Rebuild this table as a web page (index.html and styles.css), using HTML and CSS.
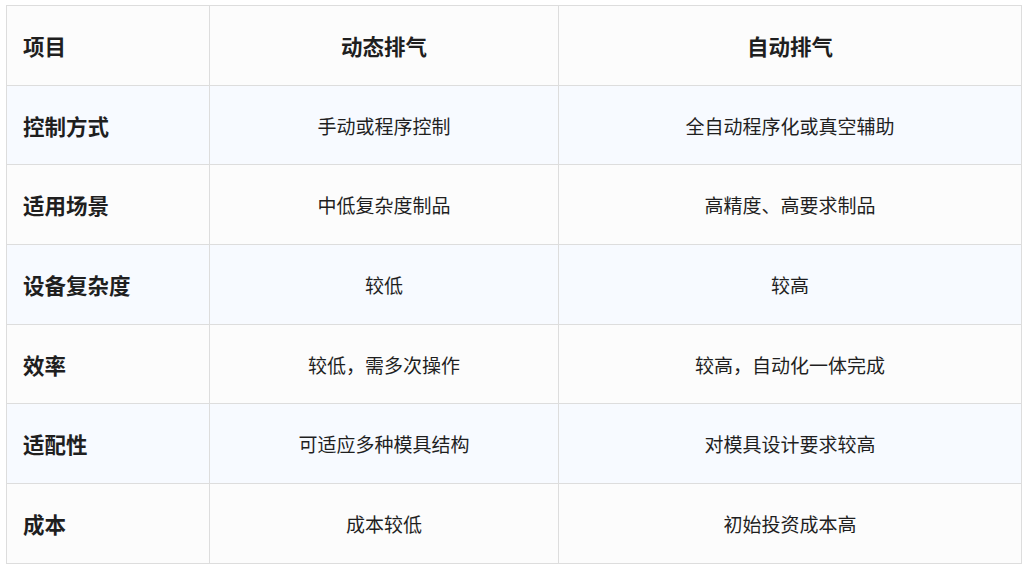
FILE: index.html
```html
<!DOCTYPE html>
<html lang="zh">
<head>
<meta charset="utf-8">
<link rel="stylesheet" href="styles.css">
</head>
<body>
<table class="cmp">
  <colgroup>
    <col class="c1"><col class="c2"><col class="c3">
  </colgroup>
  <thead>
    <tr><th class="label">项目</th><th>动态排气</th><th>自动排气</th></tr>
  </thead>
  <tbody>
    <tr class="alt"><th class="label">控制方式</th><td>手动或程序控制</td><td>全自动程序化或真空辅助</td></tr>
    <tr><th class="label">适用场景</th><td>中低复杂度制品</td><td>高精度、高要求制品</td></tr>
    <tr class="alt"><th class="label">设备复杂度</th><td>较低</td><td>较高</td></tr>
    <tr><th class="label">效率</th><td>较低，需多次操作</td><td>较高，自动化一体完成</td></tr>
    <tr class="alt"><th class="label">适配性</th><td>可适应多种模具结构</td><td>对模具设计要求较高</td></tr>
    <tr><th class="label">成本</th><td>成本较低</td><td>初始投资成本高</td></tr>
  </tbody>
</table>
</body>
</html>
```
FILE: styles.css
```css
html, body {
  margin: 0;
  background: #ffffff;
}
body {
  padding: 5px 5px 0 6px;
  font-family: "Noto Sans CJK SC", "Noto Sans", sans-serif;
  color: #1f1f1f;
}
.cmp {
  border-collapse: collapse;
  width: 1015px;
  table-layout: fixed;
}
.c1 { width: 203px; }
.c2 { width: 349px; }
.c3 { width: 463px; }
.cmp th, .cmp td {
  border: 1px solid #dddddd;
  height: 78.7px;
  padding: 0 16px;
  text-align: center;
  vertical-align: middle;
  background: #fcfcfc;
}
.cmp th {
  font-size: 21.5px;
  font-weight: 700;
}
.cmp td {
  font-size: 19px;
  font-weight: 400;
}
.cmp th.label {
  text-align: left;
}
.cmp tr.alt th, .cmp tr.alt td {
  background: #f7faff;
}
```
